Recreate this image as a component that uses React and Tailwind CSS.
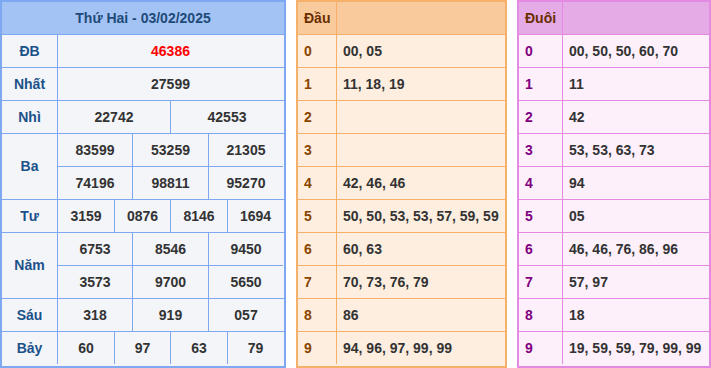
const font = { fontFamily: '"Liberation Sans", Arial, sans-serif' };

const dau = [
  ["0", "00, 05"],
  ["1", "11, 18, 19"],
  ["2", ""],
  ["3", ""],
  ["4", "42, 46, 46"],
  ["5", "50, 50, 53, 53, 57, 59, 59"],
  ["6", "60, 63"],
  ["7", "70, 73, 76, 79"],
  ["8", "86"],
  ["9", "94, 96, 97, 99, 99"],
];

const duoi = [
  ["0", "00, 50, 50, 60, 70"],
  ["1", "11"],
  ["2", "42"],
  ["3", "53, 53, 63, 73"],
  ["4", "94"],
  ["5", "05"],
  ["6", "46, 46, 76, 86, 96"],
  ["7", "57, 97"],
  ["8", "18"],
  ["9", "19, 59, 59, 79, 99, 99"],
];

// widths include the 1px left divider
const W3 = ["w-[74px]", "w-[76px]", "w-[75px]"];
const W4 = ["w-[56px]", "w-[56px]", "w-[57px]", "w-[56px]"];
const W2 = ["w-[112px]", "w-[113px]"];

function Cells({ values, widths, red }) {
  return (
    <div className="flex h-[32px]">
      {values.map((v, i) => (
        <div
          key={i}
          className={`${widths[i]} flex items-center justify-center ${
            i > 0 ? "border-l border-[#7ea9f2]" : ""
          } ${red ? "text-[#ff0000]" : "text-[#333333]"}`}
        >
          {v}
        </div>
      ))}
    </div>
  );
}

function Row({ label, lines }) {
  return (
    <div className="flex border-t border-[#7ea9f2]">
      <div className="w-[56px] shrink-0 flex items-center justify-center border-r border-[#7ea9f2] text-[#1b5189]">
        {label}
      </div>
      <div className="flex flex-col w-[225px]">
        {lines.map((l, i) => (
          <div key={i} className={i > 0 ? "border-t border-[#7ea9f2]" : ""}>
            <Cells values={l.v} widths={l.w} red={l.red} />
          </div>
        ))}
      </div>
    </div>
  );
}

function Results() {
  return (
    <div className="w-[286px] shrink-0 border-2 border-[#7ea9f2] bg-[#f3f5f9] font-bold text-[14px]">
      <div className="h-[32px] flex items-center justify-center bg-[#a4c3f5] text-[#1e4b78]">
        Thứ Hai - 03/02/2025
      </div>
      <Row label="ĐB" lines={[{ v: ["46386"], w: ["w-[225px]"], red: true }]} />
      <Row label="Nhất" lines={[{ v: ["27599"], w: ["w-[225px]"] }]} />
      <Row label="Nhì" lines={[{ v: ["22742", "42553"], w: W2 }]} />
      <Row
        label="Ba"
        lines={[
          { v: ["83599", "53259", "21305"], w: W3 },
          { v: ["74196", "98811", "95270"], w: W3 },
        ]}
      />
      <Row label="Tư" lines={[{ v: ["3159", "0876", "8146", "1694"], w: W4 }]} />
      <Row
        label="Năm"
        lines={[
          { v: ["6753", "8546", "9450"], w: W3 },
          { v: ["3573", "9700", "5650"], w: W3 },
        ]}
      />
      <Row label="Sáu" lines={[{ v: ["318", "919", "057"], w: W3 }]} />
      <Row label="Bảy" lines={[{ v: ["60", "97", "63", "79"], w: W4 }]} />
    </div>
  );
}

function LotoTable({ title, rows, width, labelW, border, headBg, bodyBg, labelColor, titleColor }) {
  return (
    <div className={`${width} shrink-0 border-2 ${border} ${bodyBg} font-bold text-[14px]`}>
      <div className={`flex h-[32px] ${headBg}`}>
        <div className={`${labelW} shrink-0 flex items-center pl-[6px] border-r ${border} ${titleColor}`}>
          {title}
        </div>
        <div className="flex-1" />
      </div>
      {rows.map(([k, v]) => (
        <div key={k} className={`flex h-[33px] border-t ${border}`}>
          <div className={`${labelW} shrink-0 flex items-center pl-[6px] border-r ${border} ${labelColor}`}>
            {k}
          </div>
          <div className="flex-1 flex items-center pl-[6px] text-[#333333] whitespace-nowrap">
            {v}
          </div>
        </div>
      ))}
    </div>
  );
}

export default function App() {
  return (
    <div className="w-[711px] h-[368px] bg-white flex gap-[10px]" style={font}>
      <Results />
      <LotoTable
        title="Đầu"
        rows={dau}
        width="w-[211px]"
        labelW="w-[39px]"
        border="border-[#f7b06a]"
        headBg="bg-[#f9cb9c]"
        bodyBg="bg-[#fdeee0]"
        labelColor="text-[#8a4500]"
        titleColor="text-[#6a2e00]"
      />
      <LotoTable
        title="Đuôi"
        rows={duoi}
        width="w-[194px]"
        labelW="w-[44px]"
        border="border-[#e48ae2]"
        headBg="bg-[#e4abe6]"
        bodyBg="bg-[#fdf0fa]"
        labelColor="text-[#800080]"
        titleColor="text-[#6a2e00]"
      />
    </div>
  );
}
